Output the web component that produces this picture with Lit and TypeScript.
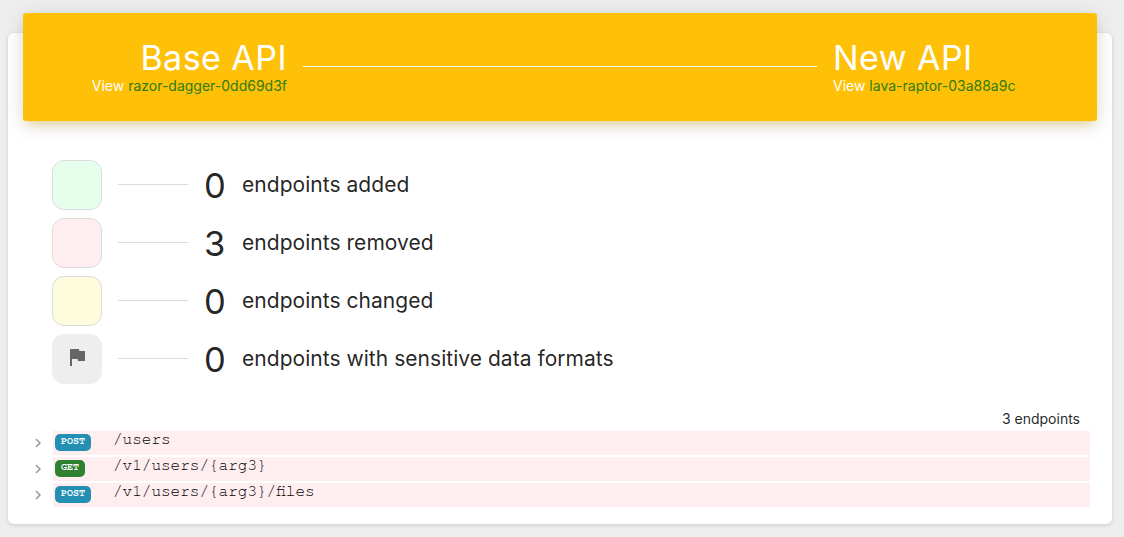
import { LitElement, html, css, svg } from 'lit';
import { customElement, property } from 'lit/decorators.js';

const sections = [
  { kind: 'added', count: 0, label: 'endpoints added' },
  { kind: 'removed', count: 3, label: 'endpoints removed' },
  { kind: 'changed', count: 0, label: 'endpoints changed' },
  { kind: 'sensitive', count: 0, label: 'endpoints with sensitive data formats' },
];

const endpoints = [
  { method: 'POST', path: '/users' },
  { method: 'GET', path: '/v1/users/{arg3}' },
  { method: 'POST', path: '/v1/users/{arg3}/files' },
];

@customElement('endpoint-row')
export class EndpointRow extends LitElement {
  @property() method = '';
  @property() path = '';

  static styles = css`
    :host {
      display: flex;
      height: 24px;
      margin-bottom: 2px;
    }
    .chevron {
      width: 30px;
      height: 24px;
    }
    .chevron svg {
      display: block;
      margin: 3px 0 0 6px;
    }
    .bar {
      flex: 1;
      display: flex;
      align-items: flex-start;
      padding-left: 2px;
      background: #ffeef0;
      font-family: 'TeX Gyre Cursor', 'Liberation Mono', monospace;
    }
    .method {
      box-sizing: border-box;
      height: 17px;
      margin-top: 3px;
      padding: 0 6px;
      border-radius: 5px;
      background: #248fb2;
      color: #fff;
      font-size: 10px;
      font-weight: 700;
      line-height: 13px;
    }
    .method.get {
      background: #2f8132;
    }
    .slot {
      width: 58px;
      display: flex;
    }
    .path {
      font-size: 16px;
      line-height: 16px;
      color: #000;
    }
  `;

  render() {
    return html`
      <div class="chevron">
        <svg width="18" height="18" viewBox="0 0 24 24" fill="#999">
          <path d="M8.6 16.6 13.2 12 8.6 7.4 10 6l6 6-6 6z" />
        </svg>
      </div>
      <div class="bar">
        <div class="slot">
          <span class="method ${this.method.toLowerCase()}">${this.method}</span>
        </div>
        <span class="path">${this.path}</span>
      </div>
    `;
  }
}

@customElement('app-root')
export class AppRoot extends LitElement {
  static styles = css`
    :host {
      display: block;
      box-sizing: border-box;
      height: 537px;
      padding: 33px 12px 13px 8px;
      background: #eee;
      font-family: Inter, sans-serif;
      color: rgba(0, 0, 0, 0.87);
    }
    .card {
      box-sizing: border-box;
      height: 491px;
      border-radius: 6px;
      background: #fff;
      box-shadow: 0 1px 4px 0 rgba(0, 0, 0, 0.14);
      display: flex;
      flex-direction: column;
    }
    .header {
      box-sizing: border-box;
      height: 108px;
      margin: -20px 15px 0;
      padding-top: 27px;
      border-radius: 3px;
      background: #ffc107;
      box-shadow: 0 4px 20px 0 rgba(0, 0, 0, 0.14), 0 7px 10px -5px rgba(255, 193, 7, 0.4);
      color: #fff;
      display: flex;
    }
    .api {
      width: 264px;
    }
    .base {
      text-align: right;
    }
    .title {
      font-size: 34px;
      font-weight: 400;
      line-height: 36px;
      letter-spacing: 0.45px;
    }
    .view {
      font-size: 14px;
      line-height: 20px;
    }
    .view a {
      color: #2e7d12;
    }
    .rule {
      flex: 1;
      height: 1px;
      margin: 26px 16px 0;
      background: #fff;
    }
    .summary {
      display: flex;
      flex-direction: column;
      gap: 8px;
      padding: 39px 44px 0;
    }
    .item {
      display: flex;
      align-items: center;
    }
    .swatch {
      box-sizing: border-box;
      width: 50px;
      height: 50px;
      border: 1px solid #dcdcdc;
      border-radius: 12px;
      display: flex;
      align-items: center;
      justify-content: center;
    }
    .swatch svg {
      margin-bottom: 5px;
    }
    .added {
      background: #e6ffed;
    }
    .removed {
      background: #ffeef0;
    }
    .changed {
      background: #fffbdd;
    }
    .sensitive {
      background: #eee;
      border-color: #eee;
    }
    .line {
      width: 70px;
      height: 1px;
      margin: 0 16px 1px;
      background: #dcdcdc;
    }
    .count {
      width: 22px;
      padding-top: 2px;
      font-size: 34.5px;
      line-height: 42px;
    }
    .label {
      margin-left: 16px;
      font-size: 21px;
      line-height: 32px;
      letter-spacing: 0.04px;
    }
    .total {
      padding: 25px 32px 0 0;
      height: 22px;
      font-size: 14px;
      line-height: 20px;
      text-align: right;
    }
    .list {
      padding: 0 22px 0 15px;
    }
  `;

  renderFlag() {
    return svg`
      <svg width="24" height="24" viewBox="0 0 24 24" fill="#666">
        <path d="M14.4 6 14 4H5v17h2v-7h5.6l.4 2h7V6z" />
      </svg>
    `;
  }

  render() {
    return html`
      <div class="card">
        <div class="header">
          <div class="api base">
            <div class="title">Base API</div>
            <div class="view">View <a>razor-dagger-0dd69d3f</a></div>
          </div>
          <div class="rule"></div>
          <div class="api">
            <div class="title">New API</div>
            <div class="view">View <a>lava-raptor-03a88a9c</a></div>
          </div>
        </div>
        <div class="summary">
          ${sections.map(s => html`
            <div class="item">
              <div class="swatch ${s.kind}">${s.kind === 'sensitive' ? this.renderFlag() : ''}</div>
              <div class="line"></div>
              <div class="count">${s.count}</div>
              <div class="label">${s.label}</div>
            </div>
          `)}
        </div>
        <div class="total">${endpoints.length} endpoints</div>
        <div class="list">
          ${endpoints.map(e => html`<endpoint-row method=${e.method} path=${e.path}></endpoint-row>`)}
        </div>
      </div>
    `;
  }
}
